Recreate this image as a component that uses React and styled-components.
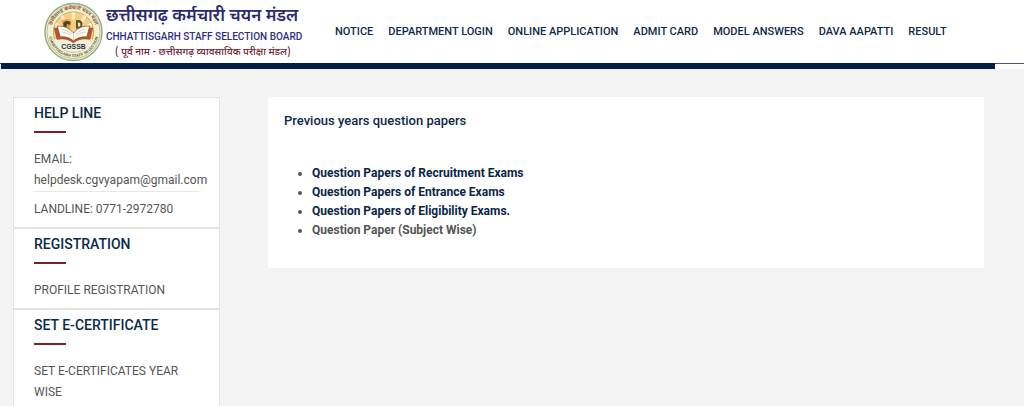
import React from "react";
import styled, { createGlobalStyle } from "styled-components";

const GlobalStyle = createGlobalStyle`
  * {
    box-sizing: border-box;
  }
  body {
    margin: 0;
    background-color: #f4f4f4;
    font-family: Roboto, "Liberation Sans", sans-serif;
    font-size: 12px;
    color: #555;
    overflow-x: hidden;
    scrollbar-width: none;
  }
`;

const Header = styled.header`
  display: flex;
  align-items: center;
  height: 63px;
  padding-left: 44px;
  background-color: white;
`;

const Brand = styled.a`
  display: flex;
  align-items: center;
  gap: 3px;
  flex: 0 0 280px;
  text-decoration: none;
  svg {
    flex-shrink: 0;
  }
`;

const BrandText = styled.div`
  display: flex;
  flex-direction: column;
  padding-top: 2px;
  white-space: nowrap;
`;

const HindiName = styled.span`
  font-family: "Noto Sans Devanagari", "Noto Sans", sans-serif;
  font-size: 17px;
  line-height: 24px;
  font-weight: 600;
  color: #2b2a6c;
`;

const EnglishName = styled.span`
  font-size: 10px;
  font-weight: 500;
  line-height: 15px;
  color: #2f2e85;
`;

const OldName = styled.span`
  padding-left: 9px;
  font-family: "Noto Sans Devanagari", "Noto Sans", sans-serif;
  font-size: 10px;
  line-height: 17px;
  font-weight: 500;
  color: #6e2430;
`;

const Nav = styled.nav`
  display: flex;
  gap: 15px;
  padding-left: 11px;
`;

const NavLink = styled.a`
  font-size: 11px;
  font-weight: 500;
  line-height: 16px;
  color: #0e2a47;
  text-decoration: none;
  white-space: nowrap;
`;

const Strip = styled.div`
  height: 6px;
  padding: 0 29px 0 1px;
  border-top: 1px solid #4b5563;
  background-color: white;
`;

const StripBar = styled.div`
  height: 6px;
  margin-top: -1px;
  background-color: #021f45;
`;

const Content = styled.main`
  display: flex;
  align-items: flex-start;
  gap: 48px;
  padding: 28px 40px 0 13px;
`;

const Sidebar = styled.aside`
  flex: 0 0 207px;
  min-width: 0;
  border: 1px solid #e2e2e2;
  background-color: white;
`;

const Widget = styled.section`
  padding: 5px 20px 7px;
  border-bottom: 2px solid #e2e2e2;
`;

const WidgetTitle = styled.h2`
  margin: 0 0 16px;
  font-size: 14px;
  font-weight: 500;
  line-height: 21px;
  color: #0a2a4a;
  &::after {
    content: "";
    display: block;
    width: 32px;
    height: 2px;
    margin-top: 7px;
    background-color: #7a1f2b;
  }
`;

const WidgetList = styled.ul`
  margin: 0;
  padding: 0;
  list-style: none;
`;

const WidgetItem = styled.li`
  line-height: 21px;
  & + & {
    padding-top: 7px;
    border-top: 1px solid #e8e8e8;
  }
`;

const WidgetLink = styled.a`
  color: #555;
  text-decoration: none;
`;

const Panel = styled.section`
  flex: 1;
  padding: 13px 16px 28px;
  background-color: white;
`;

const PanelTitle = styled.h1`
  margin: 0 0 33px;
  font-size: 13px;
  font-weight: 500;
  line-height: 21px;
  color: #0e2a47;
`;

const PaperList = styled.ul`
  margin: 0;
  padding-left: 28px;
  font-size: 12px;
  font-weight: 700;
  line-height: 19px;
`;

const PaperLink = styled.a`
  color: #0a2647;
  text-decoration: none;
`;

const Emblem = () => (
  <svg width="59" height="62" viewBox="0 0 120 124" role="img" aria-label="CGSSB emblem">
    <defs>
      <path id="ringTop" d="M14 62a46 46 0 0 1 92 0" />
      <path id="ringBottom" d="M9 62a51 51 0 0 0 102 0" />
    </defs>
    <circle cx="60" cy="62" r="58" fill="#f5efd2" stroke="#8fb092" strokeWidth="3" />
    <circle cx="60" cy="62" r="54" fill="none" stroke="#bba66a" strokeWidth="1.5" />
    <circle cx="60" cy="62" r="41" fill="#f6cf85" stroke="#9aa05f" strokeWidth="1.5" />
    <path d="M60 22v14M36 29l7 12M84 29l-7 12M23 46l13 7M97 46l-13 7" stroke="#fdecc0" strokeWidth="6" />
    <path d="M21 76c8 35 70 35 78 0z" fill="#f6f1d9" />
    <path d="M36 40c7-6 16-6 20 1l-3 15H42z" fill="#e9a53d" />
    <path d="M39 43c5-5 13-4 15 0l-2 5-5-3-2 10h-5z" fill="#4a422c" />
    <path d="M65 38c8-2 14 2 13 9s-6 10-13 8z" fill="#5b5236" />
    <path d="M69 43c4-1 5 1 5 4s-2 5-5 4z" fill="#f3dfa4" />
    <path d="M20 54c15-2 29 2 40 13 11-11 25-15 40-13l-6 24c-14-3-25 0-34 7-9-7-20-10-34-7z" fill="#b5562c" />
    <path d="M27 50c13-1 25 4 33 14 8-10 20-15 33-14l-6 22c-11-1-20 2-27 8-7-6-16-9-27-8z" fill="#fffdf5" stroke="#6c5338" strokeWidth="1.5" />
    <path d="M60 64v15M35 56c7 1 14 4 20 10M36 62c7 1 13 3 18 7M85 56c-7 1-14 4-20 10M84 62c-7 1-13 3-18 7" fill="none" stroke="#c9c0aa" strokeWidth="1.5" />
    <text x="60" y="96" textAnchor="middle" fontFamily="Liberation Sans, sans-serif" fontWeight="700" fontSize="14" fill="#28304f">CGSSB</text>
    <text fontFamily="Noto Sans Devanagari, Noto Sans, sans-serif" fontWeight="700" fontSize="10" fill="#8a5a3c">
      <textPath href="#ringTop" startOffset="50%" textAnchor="middle">छत्तीसगढ़ कर्मचारी चयन मंडल</textPath>
    </text>
    <text fontFamily="Liberation Sans, sans-serif" fontWeight="700" fontSize="8" fill="#4d6340">
      <textPath href="#ringBottom" startOffset="50%" textAnchor="middle">CHHATTISGARH STAFF SELECTION</textPath>
    </text>
  </svg>
);

const navItems = [
  "NOTICE",
  "DEPARTMENT LOGIN",
  "ONLINE APPLICATION",
  "ADMIT CARD",
  "MODEL ANSWERS",
  "DAVA AAPATTI",
  "RESULT",
];

const papers = [
  "Question Papers of Recruitment Exams",
  "Question Papers of Entrance Exams",
  "Question Papers of Eligibility Exams.",
];

const App = () => {
  return (
    <>
      <GlobalStyle />
      <Header>
        <Brand href="#">
          <Emblem />
          <BrandText>
            <HindiName lang="hi">छत्तीसगढ़ कर्मचारी चयन मंडल</HindiName>
            <EnglishName>CHHATTISGARH STAFF SELECTION BOARD</EnglishName>
            <OldName lang="hi">( पूर्व नाम - छत्तीसगढ़ व्यावसायिक परीक्षा मंडल)</OldName>
          </BrandText>
        </Brand>
        <Nav>
          {navItems.map((item) => (
            <NavLink href="#" key={item}>
              {item}
            </NavLink>
          ))}
        </Nav>
      </Header>
      <Strip>
        <StripBar />
      </Strip>
      <Content>
        <Sidebar>
          <Widget>
            <WidgetTitle>HELP LINE</WidgetTitle>
            <WidgetList>
              <WidgetItem>
                EMAIL: <WidgetLink href="mailto:helpdesk.cgvyapam@gmail.com">helpdesk.cgvyapam@gmail.com</WidgetLink>
              </WidgetItem>
              <WidgetItem>LANDLINE: 0771-2972780</WidgetItem>
            </WidgetList>
          </Widget>
          <Widget>
            <WidgetTitle>REGISTRATION</WidgetTitle>
            <WidgetList>
              <WidgetItem>
                <WidgetLink href="#">PROFILE REGISTRATION</WidgetLink>
              </WidgetItem>
            </WidgetList>
          </Widget>
          <Widget>
            <WidgetTitle>SET E-CERTIFICATE</WidgetTitle>
            <WidgetList>
              <WidgetItem>
                <WidgetLink href="#">SET E-CERTIFICATES YEAR WISE</WidgetLink>
              </WidgetItem>
            </WidgetList>
          </Widget>
        </Sidebar>
        <Panel>
          <PanelTitle>Previous years question papers</PanelTitle>
          <PaperList>
            {papers.map((paper) => (
              <li key={paper}>
                <PaperLink href="#">{paper}</PaperLink>
              </li>
            ))}
            <li>Question Paper (Subject Wise)</li>
          </PaperList>
        </Panel>
      </Content>
    </>
  );
};

export default App;
